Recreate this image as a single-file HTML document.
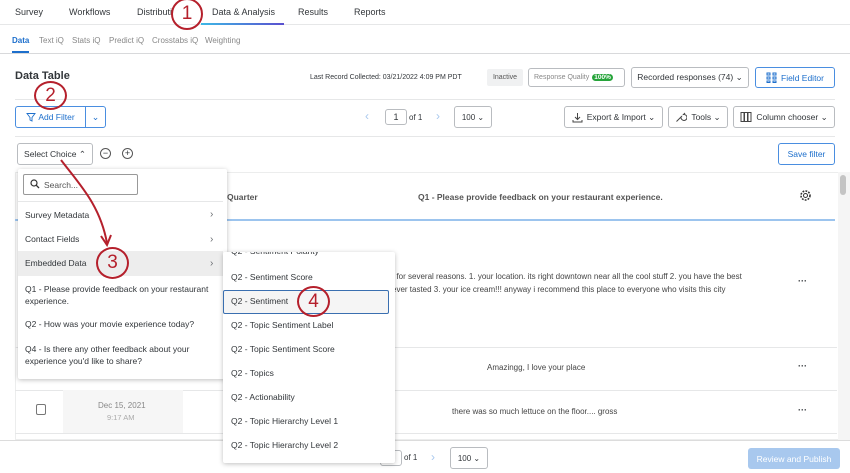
<!DOCTYPE html>
<html><head><meta charset="utf-8"><style>
*{box-sizing:border-box;margin:0;padding:0}
body{width:850px;height:473px;overflow:hidden;background:#fff;font-family:"Liberation Sans",sans-serif;color:#32363a;position:relative;font-size:9px}
.a{position:absolute;white-space:nowrap}
.btn{position:absolute;border:1px solid #b9bcc0;border-radius:3px;background:#fff;font-size:9px;display:flex;align-items:center;justify-content:center;color:#32363a}
.hl{position:absolute;height:1px;background:#e6e7e8}
.circ{position:absolute;border:2.5px solid #b5202c;border-radius:50%;color:#b5202c;font-size:19px;display:flex;align-items:center;justify-content:center;background:transparent}
.mi{position:absolute;left:25px;font-size:8.5px;color:#32363a}
.si{position:absolute;left:231px;font-size:8.5px;color:#32363a}
.chev{position:absolute;font-size:10px;color:#6a6d71}
.sub{position:absolute;top:36px;font-size:8px;color:#888}
</style></head><body>
<div class="a" style="left:15px;top:7px;font-size:9px">Survey</div>
<div class="a" style="left:69px;top:7px;font-size:9px">Workflows</div>
<div class="a" style="left:137px;top:7px;font-size:9px">Distributi</div>
<div class="a" style="left:212px;top:7px;font-size:9px">Data &amp; Analysis</div>
<div class="a" style="left:298px;top:7px;font-size:9px">Results</div>
<div class="a" style="left:354px;top:7px;font-size:9px">Reports</div>
<div class="hl" style="left:0;top:24px;width:850px"></div>
<div class="a" style="left:201px;top:23px;width:83px;height:2px;background:linear-gradient(90deg,#3db8e6,#5a4fcf)"></div>
<div class="sub" style="left:12px;color:#1d6fcc;font-weight:bold">Data</div>
<div class="a" style="left:12px;top:51px;width:17px;height:2px;background:#1d6fcc"></div>
<div class="sub" style="left:39px">Text iQ</div>
<div class="sub" style="left:72px">Stats iQ</div>
<div class="sub" style="left:109px">Predict iQ</div>
<div class="sub" style="left:152px">Crosstabs iQ</div>
<div class="sub" style="left:205px">Weighting</div>
<div class="hl" style="left:0;top:53px;width:850px;background:#d8d9db"></div>
<div class="a" style="left:15px;top:70px;font-size:11px;font-weight:bold">Data Table</div>
<div class="a" style="left:310px;top:74px;font-size:7px">Last Record Collected: 03/21/2022 4:09 PM PDT</div>
<div class="a" style="left:487px;top:69px;width:36px;height:17px;background:#f0f1f2;border-radius:2px;font-size:7px;color:#555;display:flex;align-items:center;justify-content:center">Inactive</div>
<div class="btn" style="left:528px;top:68px;width:97px;height:19px;font-size:7px;color:#888;justify-content:flex-start;padding-left:5px">Response Quality <span style="background:#26a43a;color:#fff;border-radius:6px;padding:0 2px;margin-left:3px;font-size:6.5px;font-weight:bold">100%</span></div>
<div class="btn" style="left:631px;top:67px;width:118px;height:21px;font-size:8.5px">Recorded responses (74) ⌄</div>
<div class="btn" style="left:755px;top:67px;width:80px;height:21px;border-color:#4a8ee0;color:#1d6fcc;font-size:8.5px"><svg width="11" height="11" viewBox="0 0 11 11" style="margin-right:4px"><g fill="none" stroke="#1d6fcc" stroke-width="1"><rect x="1" y="1" width="3" height="2"/><rect x="7" y="1" width="3" height="2"/><rect x="1" y="5" width="3" height="2"/><rect x="7" y="5" width="3" height="2"/><rect x="1" y="9" width="3" height="1.5"/><rect x="7" y="9" width="3" height="1.5"/></g></svg>Field Editor</div>
<div class="hl" style="left:15px;top:99px;width:820px"></div>
<div class="btn" style="left:15px;top:106px;width:71px;height:22px;border-color:#4a8ee0;color:#1d6fcc;border-radius:3px 0 0 3px;font-size:8.5px">
<svg width="10" height="10" viewBox="0 0 10 10" style="margin-right:2px"><path d="M1 1.5H9L6 5.5V9L4 8V5.5Z" fill="none" stroke="#1d6fcc" stroke-width="0.9"/></svg>Add Filter</div>
<div class="btn" style="left:85px;top:106px;width:21px;height:22px;border-color:#4a8ee0;color:#1d6fcc;border-radius:0 3px 3px 0">⌄</div>
<div class="a" style="left:365px;top:109px;font-size:12px;color:#a8c8ee">‹</div>
<div class="btn" style="left:385px;top:109px;width:22px;height:16px">1</div>
<div class="a" style="left:409px;top:113px;font-size:8px">of 1</div>
<div class="a" style="left:436px;top:109px;font-size:12px;color:#a8c8ee">›</div>
<div class="btn" style="left:454px;top:106px;width:38px;height:22px;font-size:8px">100 ⌄</div>
<div class="btn" style="left:564px;top:106px;width:99px;height:22px;font-size:8.5px"><svg width="11" height="11" viewBox="0 0 11 11" style="margin-right:4px"><path d="M5.5 1V7M3 5L5.5 7.5L8 5M1 8V10H10V8" fill="none" stroke="#444" stroke-width="1"/></svg>Export &amp; Import ⌄</div>
<div class="btn" style="left:668px;top:106px;width:60px;height:22px;font-size:8.5px"><svg width="12" height="12" viewBox="0 0 12 12" style="margin-right:4px"><path d="M1.5 10.5L6 6M6 6A3 3 0 1 0 8.5 3.5L10 2M6 6L7 5" fill="none" stroke="#444" stroke-width="1"/></svg>Tools ⌄</div>
<div class="btn" style="left:733px;top:106px;width:102px;height:22px;font-size:8.5px"><svg width="12" height="12" viewBox="0 0 12 12" style="margin-right:4px"><g fill="none" stroke="#444" stroke-width="1"><rect x="1" y="1.5" width="3" height="9"/><rect x="4.5" y="1.5" width="3" height="9"/><rect x="8" y="1.5" width="3" height="9"/></g></svg>Column chooser ⌄</div>
<div class="hl" style="left:15px;top:136px;width:820px"></div>
<div class="btn" style="left:17px;top:143px;width:76px;height:22px;font-size:8.5px">Select Choice ⌃</div>
<div class="a" style="left:100px;top:148px;width:11px;height:11px;border:1px solid #555;border-radius:50%;font-size:9px;line-height:9px;text-align:center">−</div>
<div class="a" style="left:122px;top:148px;width:11px;height:11px;border:1px solid #555;border-radius:50%;font-size:9px;line-height:9px;text-align:center">+</div>
<div class="btn" style="left:778px;top:143px;width:57px;height:22px;border-color:#4a8ee0;color:#1d6fcc;font-size:8.5px">Save filter</div>
<div class="a" style="left:15px;top:172px;width:823px;height:268px;border:1px solid #eceded;border-right:none"></div>
<div class="a" style="left:227px;top:192px;font-size:8.5px;font-weight:bold;color:#555">Quarter</div>
<div class="a" style="left:418px;top:192px;font-size:8.5px;font-weight:bold;color:#555">Q1 - Please provide feedback on your restaurant experience.</div>
<svg class="a" style="left:799px;top:189px" width="13" height="13" viewBox="0 0 13 13"><circle cx="6.5" cy="6.5" r="2" fill="none" stroke="#333" stroke-width="1"/><circle cx="6.5" cy="6.5" r="4.5" fill="none" stroke="#333" stroke-width="1.6" stroke-dasharray="1.8 1.2"/></svg>
<div class="a" style="left:15px;top:219px;width:820px;height:2px;background:#9cc4ee"></div>
<div class="a" style="left:838px;top:172px;width:12px;height:268px;background:#f5f5f5"></div>
<div class="a" style="left:840px;top:175px;width:6px;height:20px;background:#c4c4c4;border-radius:3px"></div>
<div class="a" style="left:392px;top:272px;font-size:8px;color:#444">: for several reasons. 1. your location. its right downtown near all the cool stuff 2. you have the best</div>
<div class="a" style="left:392px;top:285px;font-size:8px;color:#444">ever tasted 3. your ice cream!!! anyway i recommend this place to everyone who visits this city</div>
<div class="a" style="left:798px;top:276px;font-size:9px;font-weight:bold">···</div>
<div class="hl" style="left:15px;top:347px;width:822px"></div>
<div class="a" style="left:487px;top:363px;font-size:8px;color:#444">Amazingg, I love your place</div>
<div class="a" style="left:798px;top:361px;font-size:9px;font-weight:bold">···</div>
<div class="hl" style="left:15px;top:390px;width:822px"></div>
<div class="a" style="left:63px;top:390px;width:120px;height:43px;background:#f6f6f6"></div>
<div class="a" style="left:36px;top:404px;width:10px;height:11px;border:1px solid #777;border-radius:2px;background:#fff"></div>
<div class="a" style="left:98px;top:401px;font-size:8px;color:#888">Dec 15, 2021</div>
<div class="a" style="left:107px;top:413px;font-size:7.5px;color:#aaa">9:17 AM</div>
<div class="a" style="left:452px;top:407px;font-size:8px;color:#444">there was so much lettuce on the floor.... gross</div>
<div class="a" style="left:798px;top:405px;font-size:9px;font-weight:bold">···</div>
<div class="hl" style="left:15px;top:433px;width:822px"></div>
<div class="hl" style="left:0;top:440px;width:850px;background:#dcdcdc"></div>
<div class="btn" style="left:380px;top:450px;width:22px;height:16px"></div>
<div class="a" style="left:404px;top:453px;font-size:8px">of 1</div>
<div class="a" style="left:431px;top:450px;font-size:12px;color:#a8c8ee">›</div>
<div class="btn" style="left:450px;top:447px;width:38px;height:22px;font-size:8px">100 ⌄</div>
<div class="a" style="left:748px;top:448px;width:92px;height:21px;background:#a8c8ee;border-radius:3px;color:#fff;font-size:8.5px;display:flex;align-items:center;justify-content:center">Review and Publish</div>
<div class="a" style="left:18px;top:169px;width:209px;height:210px;background:#fff;box-shadow:0 1px 5px rgba(0,0,0,.25);border-radius:2px"></div>
<div class="a" style="left:23px;top:174px;width:115px;height:21px;border:1px solid #999;border-radius:2px;font-size:8.5px;color:#555;padding:4px 0 0 6px">
<svg width="10" height="10" viewBox="0 0 10 10" style="margin-right:4px;vertical-align:-1px"><circle cx="4" cy="4" r="3" fill="none" stroke="#333" stroke-width="1.2"/><path d="M6.2 6.2L9 9" stroke="#333" stroke-width="1.3"/></svg>Search...</div>
<div class="hl" style="left:18px;top:201px;width:205px"></div>
<div class="mi" style="top:210px">Survey Metadata</div><div class="chev" style="left:210px;top:209px">›</div>
<div class="mi" style="top:234px">Contact Fields</div><div class="chev" style="left:210px;top:234px">›</div>
<div class="a" style="left:18px;top:251px;width:205px;height:25px;background:#ededed"></div>
<div class="mi" style="top:258px">Embedded Data</div><div class="chev" style="left:210px;top:258px">›</div>
<div class="mi" style="top:283px;line-height:12px">Q1 - Please provide feedback on your restaurant<br>experience.</div>
<div class="mi" style="top:319px">Q2 - How was your movie experience today?</div>
<div class="mi" style="top:343px;line-height:12px">Q4 - Is there any other feedback about your<br>experience you'd like to share?</div>
<div class="a" style="left:223px;top:252px;width:172px;height:211px;background:#fff;box-shadow:0 1px 5px rgba(0,0,0,.25);border-radius:2px;overflow:hidden">
<div class="a" style="left:8px;top:-6px;font-size:8.5px">Q2 - Sentiment Polarity</div></div>
<div class="si" style="top:272px">Q2 - Sentiment Score</div>
<div class="a" style="left:223px;top:290px;width:166px;height:24px;border:1.3px solid #3a6fb0;border-radius:2px;background:#f5f5f5"></div>
<div class="si" style="top:296px">Q2 - Sentiment</div>
<div class="si" style="top:320px">Q2 - Topic Sentiment Label</div>
<div class="si" style="top:344px">Q2 - Topic Sentiment Score</div>
<div class="si" style="top:368px">Q2 - Topics</div>
<div class="si" style="top:392px">Q2 - Actionability</div>
<div class="si" style="top:416px">Q2 - Topic Hierarchy Level 1</div>
<div class="si" style="top:440px">Q2 - Topic Hierarchy Level 2</div>
<svg class="a" style="left:0;top:0" width="850" height="473"><path d="M61 160 C80 185,100 205,107 243" fill="none" stroke="#b5202c" stroke-width="2"/><path d="M101 236 L107 245 L111 235" fill="none" stroke="#b5202c" stroke-width="2"/></svg>
<div class="circ" style="left:171px;top:-2px;width:32px;height:32px">1</div>
<div class="circ" style="left:34px;top:81px;width:33px;height:29px">2</div>
<div class="circ" style="left:96px;top:247px;width:33px;height:32px">3</div>
<div class="circ" style="left:297px;top:286px;width:33px;height:31px">4</div>
</body></html>
